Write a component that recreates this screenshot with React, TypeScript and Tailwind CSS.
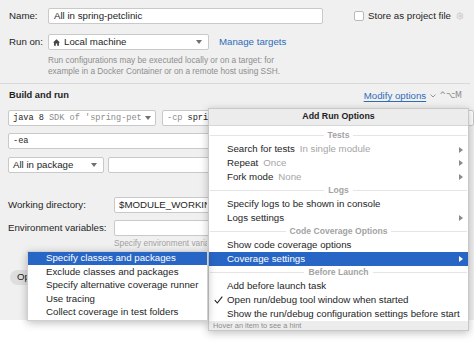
import { Settings } from "lucide-react";

const DownTri = () => (
  <svg width="6" height="4" viewBox="0 0 6 4" className="text-[#6f6f6f]">
    <path d="M0 0h6L3 4z" fill="currentColor" />
  </svg>
);

const RightTri = ({ white }: { white?: boolean }) => (
  <svg width="4" height="6" viewBox="0 0 4 6" className={white ? "text-white" : "text-[#8a8a8a]"}>
    <path d="M0 0l4 3-4 3z" fill="currentColor" />
  </svg>
);

const Box = ({ className, children }: { className?: string; children?: React.ReactNode }) => (
  <div className={`h-[16px] bg-white border border-[#c9c9c9] rounded-[2px] flex items-center ${className ?? ""}`}>
    {children}
  </div>
);

type Item =
  | { kind: "sep"; label: string }
  | { kind: "item"; label: string; hint?: string; sub?: boolean; checked?: boolean; active?: boolean };

const items: Item[] = [
  { kind: "sep", label: "Tests" },
  { kind: "item", label: "Search for tests", hint: "In single module", sub: true },
  { kind: "item", label: "Repeat", hint: "Once", sub: true },
  { kind: "item", label: "Fork mode", hint: "None", sub: true },
  { kind: "sep", label: "Logs" },
  { kind: "item", label: "Specify logs to be shown in console" },
  { kind: "item", label: "Logs settings", sub: true },
  { kind: "sep", label: "Code Coverage Options" },
  { kind: "item", label: "Show code coverage options" },
  { kind: "item", label: "Coverage settings", sub: true, active: true },
  { kind: "sep", label: "Before Launch" },
  { kind: "item", label: "Add before launch task" },
  { kind: "item", label: "Open run/debug tool window when started", checked: true },
  { kind: "item", label: "Show the run/debug configuration settings before start" },
];

const coverage = [
  "Specify classes and packages",
  "Exclude classes and packages",
  "Specify alternative coverage runner",
  "Use tracing",
  "Collect coverage in test folders",
];

export default function App() {
  return (
    <div className="w-[474px] h-[345px] bg-white relative overflow-hidden font-['Liberation_Sans',Arial,sans-serif] text-[#1e1e1e] text-[9.7px]">
      <div className="h-[320px] bg-[#f0f0f0] pt-[8px]">
        {/* name */}
        <div className="flex items-center h-[16px] pl-[9px]">
          <span className="w-[39px]">Name:</span>
          <Box className="w-[275px] px-[5px]">All in spring-petclinic</Box>
          <div className="ml-[31px] w-[10px] h-[10px] bg-white border border-[#b9b9b9] rounded-[2px]" />
          <span className="ml-[4px]">Store as project file</span>
          <Settings size={8} className="ml-[5px] text-[#bdbdbd]" />
        </div>

        {/* run on */}
        <div className="flex items-center h-[16px] pl-[9px] mt-[10px]">
          <span className="w-[39px]">Run on:</span>
          <Box className="w-[161px] px-[4px]">
            <svg width="7" height="7" viewBox="0 0 10 10" className="text-[#444]">
              <path d="M5 0.5L10 5H8.5v4.5H6V6.5H4v3H1.5V5H0z" fill="currentColor" />
            </svg>
            <span className="ml-[4px]">Local machine</span>
            <span className="ml-auto mr-[2px]">
              <DownTri />
            </span>
          </Box>
          <span className="ml-[10px] text-[#2f6db8]">Manage targets</span>
        </div>

        <div className="pl-[48px] mt-[5px] text-[8.3px] leading-[11px] text-[#8e8e8e]">
          <div>Run configurations may be executed locally or on a target: for</div>
          <div>example in a Docker Container or on a remote host using SSH.</div>
        </div>

        <div className="mt-[6px] h-px bg-[#d9d9d9] mr-[4px]" />

        {/* build and run */}
        <div className="flex items-center h-[14px] mt-[5px] pl-[9px] pr-[12px]">
          <span className="font-bold text-[9.3px]">Build and run</span>
          <span className="ml-auto text-[#2f6db8] underline underline-offset-2">Modify options</span>
          <svg width="6" height="4" viewBox="0 0 6 4" className="ml-[4px] text-[#8a8a8a]">
            <path d="M0.5 0.5L3 3l2.5-2.5" stroke="currentColor" fill="none" strokeWidth="0.9" />
          </svg>
          <span className="ml-[3px] text-[#8a8a8a] font-['DejaVu_Sans',sans-serif] text-[8px]">^⌥M</span>
        </div>

        <div className="flex items-center mt-[7px] pl-[8px] gap-[6px] font-['Liberation_Mono',monospace] text-[8.6px]">
          <Box className="w-[148px] px-[4px]">
            <span>java 8</span>
            <span className="ml-[5px] text-[#8c8c8c]">SDK of 'spring-pet</span>
            <span className="ml-auto">
              <DownTri />
            </span>
          </Box>
          <Box className="flex-1 px-[4px]">
            <span className="text-[#8c8c8c]">-cp</span>
            <span className="ml-[5px] w-[24px] overflow-hidden whitespace-nowrap">spring-petclinic</span>
          </Box>
        </div>

        <div className="mt-[7px] pl-[8px] pr-[8px] font-['Liberation_Mono',monospace] text-[8.6px]">
          <Box className="px-[4px]">-ea</Box>
        </div>

        <div className="flex items-center mt-[8px] pl-[8px] pr-[8px] gap-[4px]">
          <Box className="w-[96px] px-[4px]">
            <span>All in package</span>
            <span className="ml-auto mr-[2px]">
              <DownTri />
            </span>
          </Box>
          <Box className="flex-1" />
        </div>

        <div className="flex items-center mt-[24px] pl-[8px] pr-[8px] h-[16px]">
          <span className="w-[106px]">Working directory:</span>
          <Box className="flex-1 px-[4px]">
            <span className="w-[88px] overflow-hidden whitespace-nowrap">$MODULE_WORKING_DIR$</span>
          </Box>
        </div>

        <div className="flex items-center mt-[7px] pl-[8px] pr-[8px] h-[16px]">
          <span className="w-[106px]">Environment variables:</span>
          <Box className="flex-1" />
        </div>

        <div className="pl-[114px] mt-[2px] leading-[11px] text-[8.3px] text-[#a0a0a0]">
          <span className="inline-block w-[93px] overflow-hidden whitespace-nowrap align-top">
            Specify environment variables
          </span>
        </div>

        <div className="pl-[10px] mt-[21px]">
          <div className="inline-flex items-center h-[15px] w-[60px] pl-[7px] rounded-full bg-[#dedede]">
            <span className="w-[10px] overflow-hidden whitespace-nowrap">Open tool window</span>
          </div>
        </div>
      </div>

      {/* add run options popup */}
      <div className="absolute left-[208px] top-[108px] w-[261px] bg-white border border-[#c8c8c8] shadow-[0_2px_8px_rgba(0,0,0,0.25)]">
        <div className="h-[17px] bg-[#ececec] border-b border-[#d6d6d6] flex items-center justify-center font-bold text-[8.8px]">
          Add Run Options
        </div>
        <div className="pt-[3px]">
          {items.map((it) =>
            it.kind === "sep" ? (
              <div key={it.label} className="h-[13.7px] flex items-center gap-[4px] px-[1px]">
                <div className="flex-1 h-px bg-[#e5e5e5]" />
                <span className="font-bold text-[8.6px] text-[#a3a3a3]">{it.label}</span>
                <div className="flex-1 h-px bg-[#e5e5e5]" />
              </div>
            ) : (
              <div
                key={it.label}
                className={`h-[13.7px] flex items-center pl-[18px] pr-[5px] relative ${
                  it.active ? "bg-[#2866c5] text-white" : ""
                }`}
              >
                {it.checked && (
                  <svg width="9" height="8" viewBox="0 0 9 8" className="absolute left-[5px]">
                    <path d="M0.8 4.2L3.3 7 8.3 0.6" stroke="#1e1e1e" strokeWidth="1.1" fill="none" />
                  </svg>
                )}
                <span>{it.label}</span>
                {it.hint && <span className="ml-[5px] text-[#a5a5a5]">{it.hint}</span>}
                {it.sub && (
                  <span className="ml-auto">
                    <RightTri white={it.active} />
                  </span>
                )}
              </div>
            )
          )}
        </div>
        <div className="h-[9px] bg-[#ececec] flex items-center pl-[4px] text-[7.4px] text-[#8d8d8d]">
          Hover an item to see a hint
        </div>
      </div>

      {/* coverage submenu */}
      <div className="absolute left-[27px] top-[251px] w-[181px] bg-white border border-[#d0d0d0] shadow-[0_2px_8px_rgba(0,0,0,0.25)] pb-[1px]">
        {coverage.map((c, i) => (
          <div
            key={c}
            className={`h-[13.4px] flex items-center pl-[18px] ${i === 0 ? "bg-[#2866c5] text-white" : ""}`}
          >
            {c}
          </div>
        ))}
      </div>
    </div>
  );
}
